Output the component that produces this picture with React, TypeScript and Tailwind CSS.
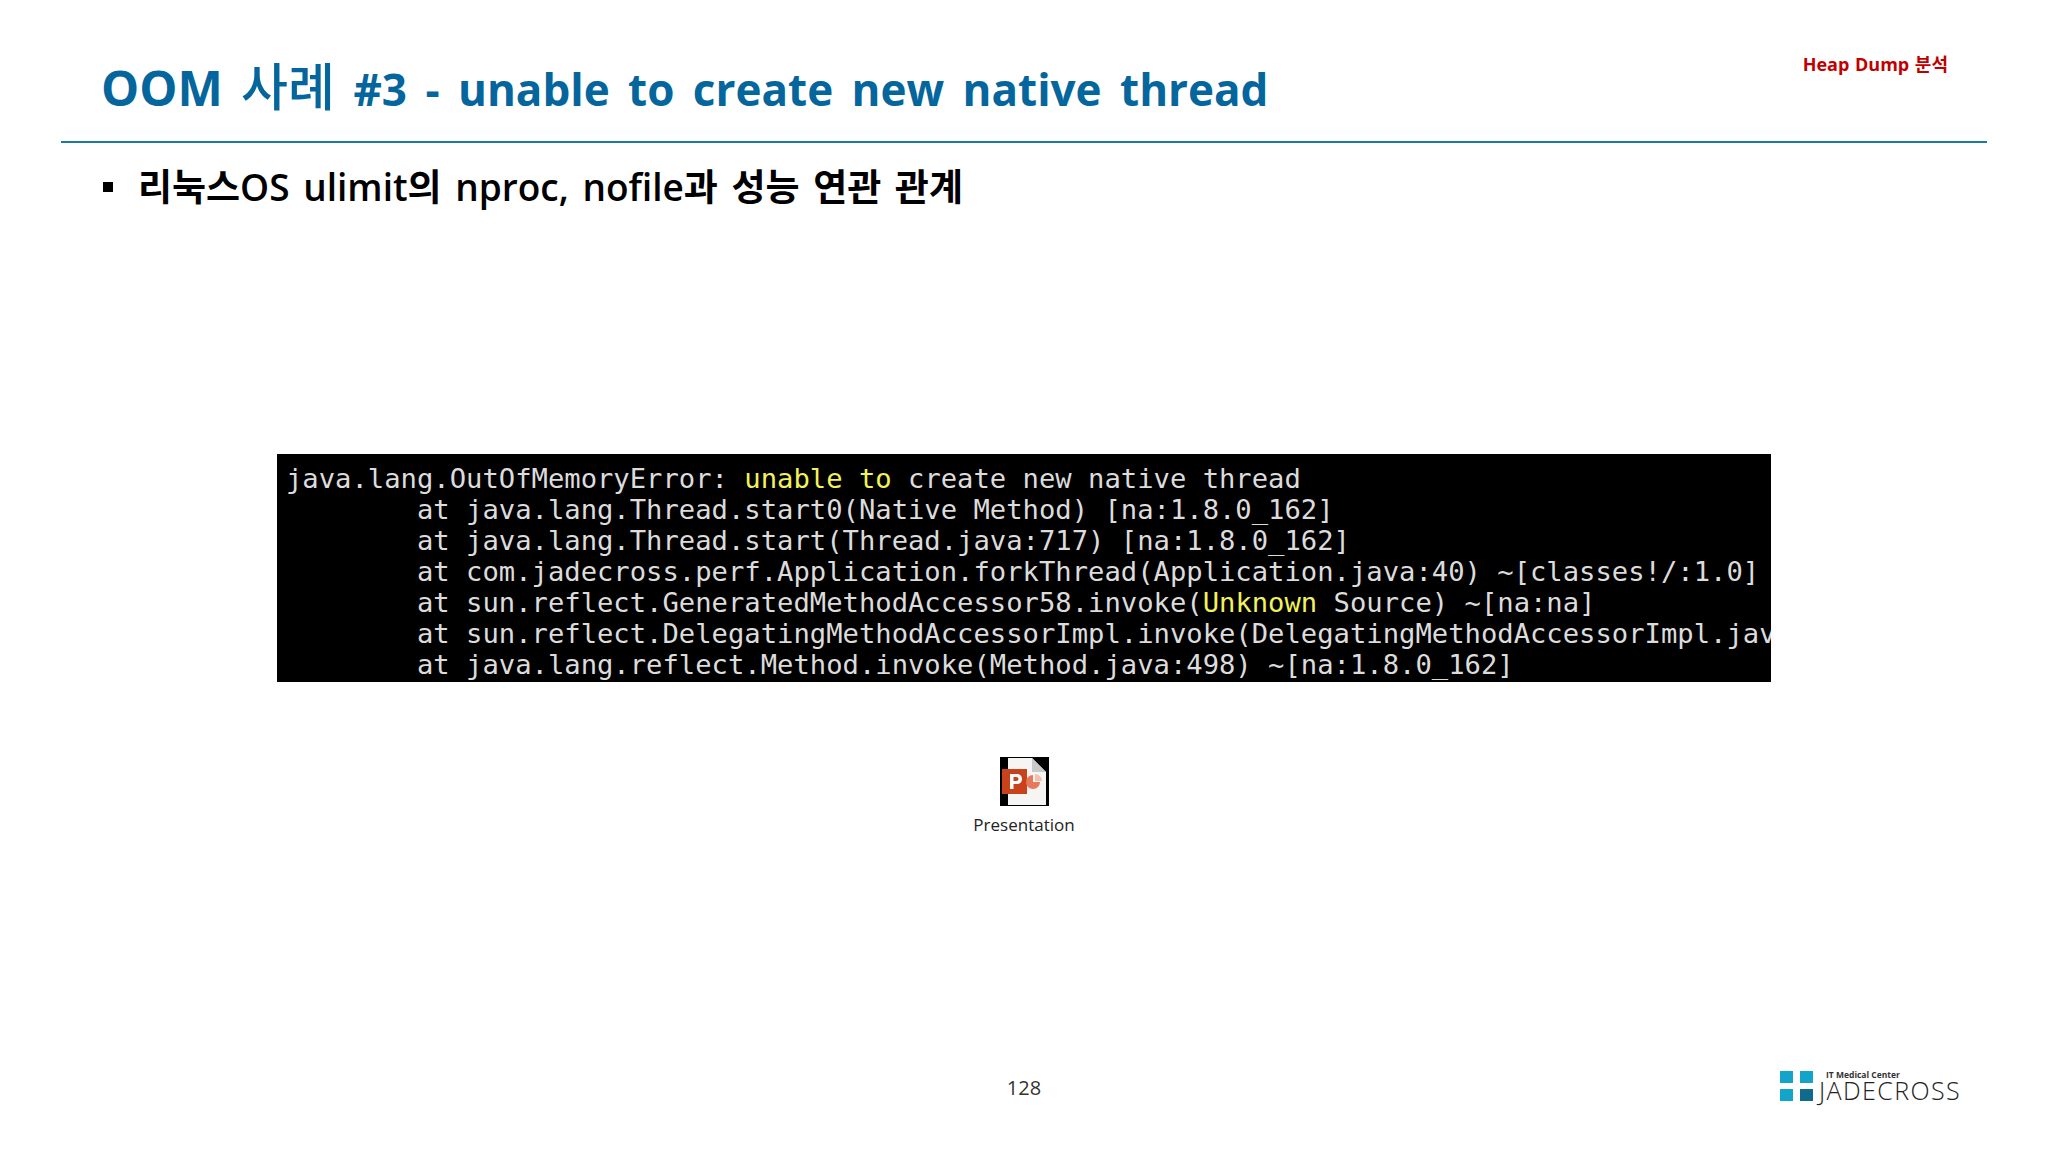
const sans = "font-['Open_Sans','Noto_Sans_CJK_KR',sans-serif]"

const lines = [
  <>java.lang.OutOfMemoryError: <span className="text-[#f2f25a]">unable to</span> create new native thread</>,
  <>{'        '}at java.lang.Thread.start0(Native Method) [na:1.8.0_162]</>,
  <>{'        '}at java.lang.Thread.start(Thread.java:717) [na:1.8.0_162]</>,
  <>{'        '}at com.jadecross.perf.Application.forkThread(Application.java:40) ~[classes!/:1.0]</>,
  <>{'        '}at sun.reflect.GeneratedMethodAccessor58.invoke(<span className="text-[#f2f25a]">Unknown</span> Source) ~[na:na]</>,
  <>{'        '}at sun.reflect.DelegatingMethodAccessorImpl.invoke(DelegatingMethodAccessorImpl.java:43)</>,
  <>{'        '}at java.lang.reflect.Method.invoke(Method.java:498) ~[na:1.8.0_162]</>,
]

function PptIcon() {
  return (
    <svg width="49" height="49" viewBox="0 0 49 49">
      <rect width="49" height="49" fill="#000" />
      <path d="M8 1H32L46 15V48H8Z" fill="#f7f5f3" />
      <path d="M32 1L46 15H32Z" fill="#c9c9c9" />
      <rect x="2" y="12" width="25" height="25" fill="#c8431c" />
      <path d="M10 32V17H16.5C20 17 22 19 22 22C22 25 20 27 16.500 27H13.500V32ZM13.500 20V24H16C17.600 24 18.500 23.200 18.500 22C18.500 20.800 17.600 20 16 20Z" fill="#fff" />
      <path d="M33 18A7 7 0 1 0 40 25H33Z" fill="#e8785a" />
      <path d="M35 17A7 7 0 0 1 42 24H35Z" fill="#f4c0ac" />
    </svg>
  )
}

function Logo() {
  return (
    <div className="flex items-end gap-[6px]">
      <div className="grid grid-cols-[13px_13px] grid-rows-[12px_12px] gap-x-[7px] gap-y-[6px] mb-[1px]">
        <div className="bg-[#12a5c9]" />
        <div className="bg-[#12a5c9]" />
        <div className="bg-[#12a5c9]" />
        <div className="bg-[#0f6a8c]" />
      </div>
      <div className="flex flex-col">
        <span className="text-[8.5px] leading-[9px] font-bold text-[#333] pl-[7px] font-['Open_Sans',sans-serif]">IT Medical Center</span>
        <span className="text-[25px] leading-[23px] font-light text-[#222] tracking-[1.4px] font-['Open_Sans',sans-serif]">JADECROSS</span>
      </div>
    </div>
  )
}

export default function App() {
  return (
    <div className={`w-[2048px] h-[1152px] bg-white flex flex-col overflow-hidden ${sans}`}>
      {/* Header */}
      <div className="mx-[61px] h-[143px] border-b-2 border-[#1c7a9e] flex items-start justify-between px-[40px]">
        <h1 className="mt-[51px] text-[44px] leading-[70px] font-bold text-[#04669c] [word-spacing:7px] whitespace-nowrap">
          <span className="text-[48px]">OOM</span> <span className="text-[51px] font-medium">사례</span> #3 - unable to create new native thread
        </h1>
        <span className="mt-[52px] mr-[-1px] text-[18px] leading-[24px] font-bold text-[#c00000] [word-spacing:1px]">Heap Dump 분석</span>
      </div>

      {/* Bullet */}
      <div className="ml-[103px] mt-[19px] flex items-center gap-[25px] h-[50px]">
        <div className="w-[10px] h-[10px] bg-black" />
        <span className="text-[37px] leading-[50px] font-semibold text-black whitespace-nowrap [word-spacing:4px]">
          리눅스OS ulimit의 nproc, nofile과 성능 연관 관계
        </span>
      </div>

      {/* Terminal */}
      <div className="ml-[277px] mt-[242px] w-[1494px] h-[228px] bg-black overflow-hidden pl-[9px] pt-[9px] font-['DejaVu_Sans_Mono',monospace] text-[27.2px] leading-[31px] text-[#dcdcdc] whitespace-pre">
        {lines.map((line, i) => <div key={i}>{line}</div>)}
      </div>

      {/* Embedded file */}
      <div className="mt-[75px] flex flex-col items-center gap-[6px]">
        <PptIcon />
        <span className="text-[17px] leading-[25px] text-[#222]">Presentation</span>
      </div>

      {/* Footer */}
      <div className="mt-auto mb-[50px] grid grid-cols-[1fr_auto_1fr] items-center px-[87px]">
        <div />
        <span className="mt-[4px] text-[20px] leading-[28px] text-[#333]">128</span>
        <div className="flex justify-end">
          <Logo />
        </div>
      </div>
    </div>
  )
}
